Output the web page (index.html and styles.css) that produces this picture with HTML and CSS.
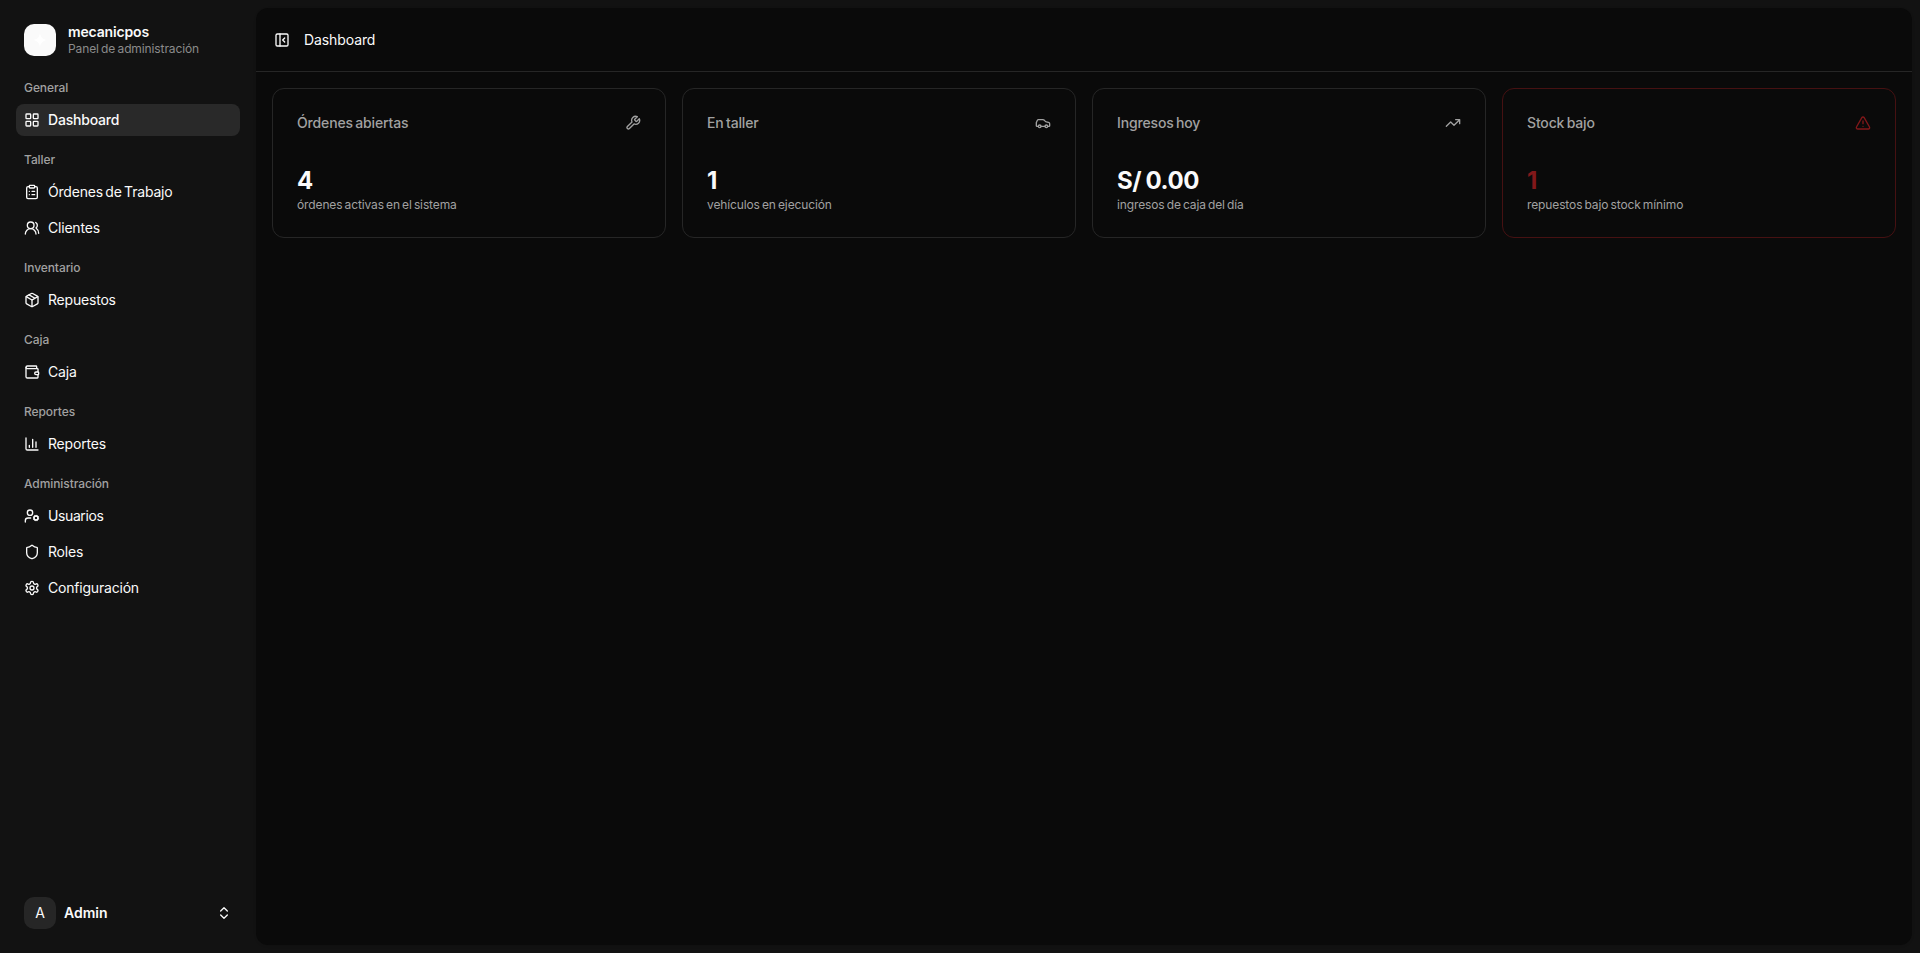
FILE: index.html
```html
<!DOCTYPE html>
<html lang="es">
<head>
<meta charset="utf-8">
<title>Dashboard - mecanicpos</title>
<link rel="stylesheet" href="styles.css">
</head>
<body>
<div class="app">
  <aside class="sidebar">
    <div class="brand">
      <div class="brand-logo"><svg viewBox="0 0 24 24"><path d="M12 1c1 7 4 10 11 11-7 1-10 4-11 11-1-7-4-10-11-11 7-1 10-4 11-11z"/></svg></div>
      <div class="brand-text"><span class="brand-name">mecanicpos</span><span class="brand-sub">Panel de administración</span></div>
    </div>
    <nav class="nav">
      <section class="group"><h2 class="label">General</h2>
        <a class="item active"><svg class="icon" viewBox="0 0 24 24"><rect width="7" height="7" x="3" y="3" rx="1"/><rect width="7" height="7" x="14" y="3" rx="1"/><rect width="7" height="7" x="14" y="14" rx="1"/><rect width="7" height="7" x="3" y="14" rx="1"/></svg><span>Dashboard</span></a></section>
      <section class="group"><h2 class="label">Taller</h2>
        <a class="item"><svg class="icon" viewBox="0 0 24 24"><rect width="8" height="4" x="8" y="2" rx="1"/><path d="M16 4h2a2 2 0 0 1 2 2v14a2 2 0 0 1-2 2H6a2 2 0 0 1-2-2V6a2 2 0 0 1 2-2h2M12 11h4M12 16h4M8 11h.01M8 16h.01"/></svg><span>Órdenes de Trabajo</span></a>
        <a class="item"><svg class="icon" viewBox="0 0 24 24"><path d="M18 21a8 8 0 0 0-16 0"/><circle cx="10" cy="8" r="5"/><path d="M22 20c0-3.370-2-6.500-4-8a5 5 0 0 0-.45-8.300"/></svg><span>Clientes</span></a></section>
      <section class="group"><h2 class="label">Inventario</h2>
        <a class="item"><svg class="icon" viewBox="0 0 24 24"><path d="M11 21.730a2 2 0 0 0 2 0l7-4A2 2 0 0 0 21 16V8a2 2 0 0 0-1-1.730l-7-4a2 2 0 0 0-2 0l-7 4A2 2 0 0 0 3 8v8a2 2 0 0 0 1 1.730zM12 22V12"/><path d="m3.300 7 8.700 5 8.700-5M7.500 4.270l9 5.150"/></svg><span>Repuestos</span></a></section>
      <section class="group"><h2 class="label">Caja</h2>
        <a class="item"><svg class="icon" viewBox="0 0 24 24"><path d="M19 7V4a1 1 0 0 0-1-1H5a2 2 0 0 0 0 4h15a1 1 0 0 1 1 1v4h-3a2 2 0 0 0 0 4h3a1 1 0 0 0 1-1v-2a1 1 0 0 0-1-1"/><path d="M3 5v14a2 2 0 0 0 2 2h15a1 1 0 0 0 1-1v-4"/></svg><span>Caja</span></a></section>
      <section class="group"><h2 class="label">Reportes</h2>
        <a class="item"><svg class="icon" viewBox="0 0 24 24"><path d="M3 3v16a2 2 0 0 0 2 2h16M18 17V9M13 17V5M8 17v-3"/></svg><span>Reportes</span></a></section>
      <section class="group"><h2 class="label">Administración</h2>
        <a class="item"><svg class="icon" viewBox="0 0 24 24"><path d="M10 15H6a4 4 0 0 0-4 4v2"/><circle cx="9" cy="7" r="4"/><circle cx="18" cy="15" r="3"/><path d="m21.700 16.400-.9-.3M15.200 13.900l-.9-.3M16.600 18.700l.3-.9M19.100 12.200l.3-.9M19.600 18.700l-.4-1M16.800 12.300l-.4-1M14.300 16.600l1-.4M20.700 13.800l1-.4"/></svg><span class="tight">Usuarios</span></a>
        <a class="item"><svg class="icon" viewBox="0 0 24 24"><path d="M20 13c0 5-3.500 7.500-7.660 8.950a1 1 0 0 1-.67-.01C7.500 20.500 4 18 4 13V6a1 1 0 0 1 1-1c2 0 4.500-1.200 6.240-2.720a1.170 1.170 0 0 1 1.520 0C14.510 3.810 17 5 19 5a1 1 0 0 1 1 1z"/></svg><span>Roles</span></a>
        <a class="item"><svg class="icon" viewBox="0 0 24 24"><path d="M12.220 2h-.44a2 2 0 0 0-2 2v.18a2 2 0 0 1-1 1.730l-.43.25a2 2 0 0 1-2 0l-.15-.08a2 2 0 0 0-2.730.73l-.22.38a2 2 0 0 0 .73 2.730l.15.1a2 2 0 0 1 1 1.720v.51a2 2 0 0 1-1 1.740l-.15.09a2 2 0 0 0-.73 2.730l.22.38a2 2 0 0 0 2.730.73l.15-.08a2 2 0 0 1 2 0l.43.25a2 2 0 0 1 1 1.730V20a2 2 0 0 0 2 2h.44a2 2 0 0 0 2-2v-.18a2 2 0 0 1 1-1.730l.43-.25a2 2 0 0 1 2 0l.15.08a2 2 0 0 0 2.730-.73l.22-.39a2 2 0 0 0-.73-2.730l-.15-.08a2 2 0 0 1-1-1.740v-.5a2 2 0 0 1 1-1.740l.15-.09a2 2 0 0 0 .73-2.730l-.22-.38a2 2 0 0 0-2.730-.73l-.15.08a2 2 0 0 1-2 0l-.43-.25a2 2 0 0 1-1-1.730V4a2 2 0 0 0-2-2z"/><circle cx="12" cy="12" r="3"/></svg><span>Configuración</span></a></section>
    </nav>
    <div class="user"><div class="avatar">A</div><span class="user-name">Admin</span><svg class="icon" viewBox="0 0 24 24"><path d="m7 15 5 5 5-5M7 9l5-5 5 5"/></svg></div>
  </aside>
  <main class="main">
    <header class="header"><svg class="icon" viewBox="0 0 24 24"><rect width="18" height="18" x="3" y="3" rx="2"/><path d="M9 3v18M16 15l-3-3 3-3"/></svg><h1 class="title">Dashboard</h1></header>
    <div class="cards">
      <article class="card"><div class="card-head"><span class="card-title">Órdenes abiertas</span><svg class="icon" viewBox="0 0 24 24"><path d="M14.700 6.300a1 1 0 0 0 0 1.400l1.600 1.600a1 1 0 0 0 1.400 0l3.770-3.770a6 6 0 0 1-7.940 7.940l-6.910 6.910a2.120 2.120 0 0 1-3-3l6.910-6.910a6 6 0 0 1 7.940-7.940z"/></svg></div><div class="value">4</div><p class="note">órdenes activas en el sistema</p></article>
      <article class="card"><div class="card-head"><span class="card-title">En taller</span><svg class="icon" viewBox="0 0 24 24"><path d="M19 17h2c.6 0 1-.4 1-1v-3c0-.9-.7-1.700-1.500-1.900C18.700 10.600 16 10 16 10s-1.300-1.400-2.200-2.300c-.5-.4-1.100-.7-1.800-.7H5c-.6 0-1.100.4-1.400.9l-1.400 2.900A3.700 3.700 0 0 0 2 12v4c0 .6.4 1 1 1h2M9 17h6"/><circle cx="7" cy="17" r="2"/><circle cx="17" cy="17" r="2"/></svg></div><div class="value">1</div><p class="note">vehículos en ejecución</p></article>
      <article class="card"><div class="card-head"><span class="card-title">Ingresos hoy</span><svg class="icon" viewBox="0 0 24 24"><path d="m22 7-8.500 8.500-5-5L2 17M16 7h6v6"/></svg></div><div class="value">S/ 0.00</div><p class="note">ingresos de caja del día</p></article>
      <article class="card danger"><div class="card-head"><span class="card-title">Stock bajo</span><svg class="icon" viewBox="0 0 24 24"><path d="m21.730 18-8-14a2 2 0 0 0-3.480 0l-8 14A2 2 0 0 0 4 21h16a2 2 0 0 0 1.730-3M12 9v4M12 17h.01"/></svg></div><div class="value">1</div><p class="note">repuestos bajo stock mínimo</p></article>
    </div>
  </main>
</div>
</body>
</html>
```
FILE: styles.css
```css
* { box-sizing: border-box; margin: 0; }
body { background: #121212; color: #fafafa; font-family: Inter, "Liberation Sans", sans-serif; font-size: 14px; line-height: 20px; }
.app { display: flex; height: 953px; }
.icon { width: 16px; height: 16px; flex: none; fill: none; stroke: currentColor; stroke-width: 2; stroke-linecap: round; stroke-linejoin: round; }
.sidebar { width: 256px; padding: 16px; display: flex; flex-direction: column; }
.brand { display: flex; align-items: center; gap: 12px; height: 48px; padding: 0 8px; }
.brand-logo { width: 32px; height: 32px; border-radius: 10px; background: #fafafa; display: grid; place-items: center; }
.brand-logo svg { width: 16px; height: 16px; fill: #fff; }
.brand-text { display: flex; flex-direction: column; }
.brand-name { font-weight: 600; line-height: 17px; margin-top: -1px; padding-bottom: 1px; letter-spacing: -.16px; }
.brand-sub { font-size: 12px; line-height: 16px; color: #8b8b8b; letter-spacing: -.11px; word-spacing: -1px; }
.nav { display: flex; flex-direction: column; gap: 8px; padding-top: 8px; }
.group { display: flex; flex-direction: column; gap: 4px; }
.label { height: 32px; margin-bottom: -4px; padding: 0 8px; font-size: 12px; line-height: 32px; font-weight: 500; color: #a1a1a1; letter-spacing: -.08px; }
.item { display: flex; align-items: center; gap: 8px; height: 32px; padding: 0 8px; border-radius: 8px; letter-spacing: -.2px; word-spacing: -1.3px; }
.tight { letter-spacing: -.4px; }
.active { background: #292929; font-weight: 500; }
.user { display: flex; align-items: center; gap: 8px; height: 48px; margin-top: auto; padding: 0 8px; }
.avatar { width: 32px; height: 32px; border-radius: 10px; background: #262626; display: grid; place-items: center; }
.user-name { flex: 1; font-weight: 600; padding-bottom: 1px; }
.main { flex: 1; margin: 8px 8px 8px 0; border-radius: 12px; background: #0a0a0a; box-shadow: 0 1px 3px rgba(0, 0, 0, .1); }
.header { display: flex; align-items: center; gap: 14px; height: 64px; padding: 0 18px; border-bottom: 1px solid #262626; }
.title { font-size: 14px; font-weight: 400; line-height: 20px; letter-spacing: -.1px; }
.cards { display: grid; grid-template-columns: repeat(4, 1fr); gap: 16px; padding: 16px; }
.card { height: 150px; padding: 24px; border: 1px solid #262626; border-radius: 12px; }
.card-head { display: flex; align-items: center; justify-content: space-between; height: 20px; color: #a1a1a1; }
.card-title { font-weight: 500; letter-spacing: -.15px; word-spacing: -1.2px; }
.value { margin-top: 32px; font-size: 24px; line-height: 32px; font-weight: 700; letter-spacing: -.45px; word-spacing: -.8px; }
.note { font-size: 12px; line-height: 16px; color: #a1a1a1; letter-spacing: -.12px; word-spacing: -1.1px; }
.danger { border-color: #461112; }
.danger .value, .danger .icon { color: #82181a; }
```
